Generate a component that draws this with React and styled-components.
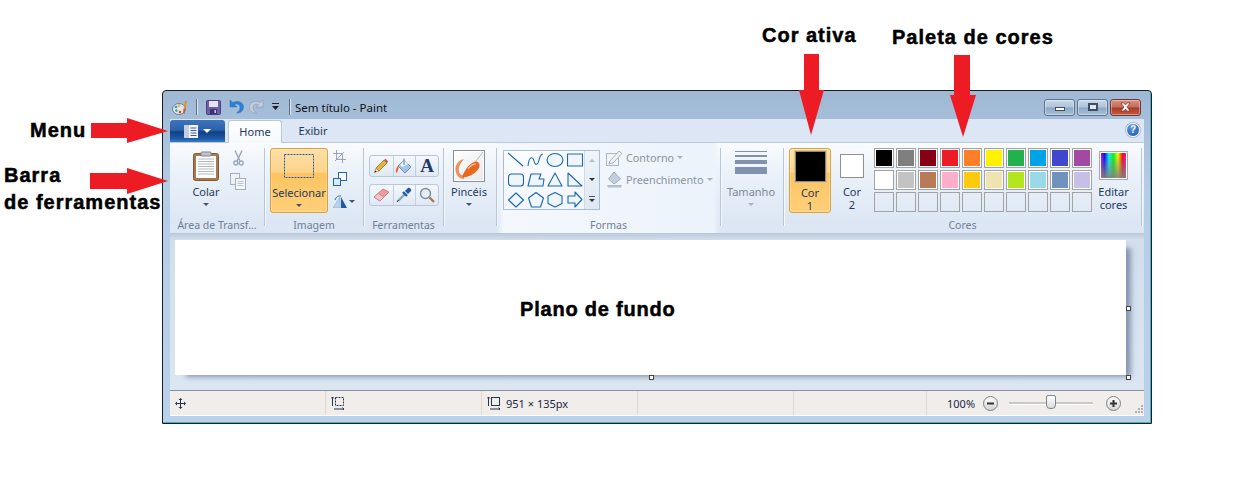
import styled, { createGlobalStyle } from 'styled-components'

const GlobalStyle = createGlobalStyle`
  html, body { margin: 0; padding: 0; background: #fff; }
  body { font-family: "Noto Sans", "Open Sans", sans-serif; }
`

const Page = styled.div`
  position: relative;
  width: 1252px;
  height: 504px;
  padding: 90px 0 0 162px;
  box-sizing: border-box;
  overflow: hidden;
`
const Callout = styled.div`
  position: absolute;
  left: ${p => p.$x}px;
  top: ${p => p.$y}px;
  font: bold 20px/27px "Liberation Sans", Arial, sans-serif;
  letter-spacing: 1px;
  color: #000;
  -webkit-text-stroke: 0.5px #000;
  white-space: nowrap;
`
const ArrowSvg = styled.svg`
  position: absolute;
  left: 0;
  top: 0;
  pointer-events: none;
`
const Window = styled.div`
  width: 990px;
  height: 334px;
  box-sizing: border-box;
  border: 1px solid #1c1c1c;
  border-radius: 4px 4px 0 0;
  background: linear-gradient(#9fb8d4, #b5cde7 30%, #b9d1ea);
  box-shadow: inset -1px -1px 0 #39b4cc;
  padding: 0 7px;
  display: flex;
  flex-direction: column;
`
const TitleBar = styled.div`
  height: 28px;
  display: flex;
  align-items: center;
  flex: none;
  padding: 4px 0 0 2px;
  box-sizing: border-box;
`
const QuickIcon = styled.div`
  width: ${p => p.$w}px;
  margin-right: ${p => p.$gap || 0}px;
  display: flex;
  justify-content: center;
`
const QuickSep = styled.div`
  width: 1px;
  height: 16px;
  background: #5f6f82;
  box-shadow: 1px 0 0 #dbe6f2;
  margin-right: ${p => p.$gap}px;
`
const TitleText = styled.div`
  font-size: 11.5px;
  color: #111;
  flex: 1;
`
const CaptionButtons = styled.div`
  display: flex;
  gap: 2px;
  margin-right: 3px;
`
const CaptionButton = styled.div`
  width: ${p => p.$w}px;
  height: 17px;
  box-sizing: border-box;
  border: 1px solid ${p => (p.$close ? '#6e3a30' : '#5e738c')};
  border-radius: 3px;
  background: ${p => (p.$close
    ? 'linear-gradient(#dc8f80, #c86a58 48%, #a93a26 52%, #c25a44)'
    : 'linear-gradient(#c9d9ea, #aec4da 48%, #8ba6c3 52%, #a9c2db)')};
  box-shadow: inset 0 0 0 1px rgba(255,255,255,.35);
  display: flex;
  align-items: center;
  justify-content: center;
`
const MinGlyph = styled.div`
  width: 10px;
  height: 4px;
  margin-top: 4px;
  box-sizing: border-box;
  background: #fff;
  border: 1px solid #3e4f63;
`
const MaxGlyph = styled.div`
  width: 10px;
  height: 8px;
  box-sizing: border-box;
  background: #dfe8f1;
  border: 2px solid #3e4f63;
  border-top-width: 2px;
`
const TabRow = styled.div`
  height: 24px;
  flex: none;
  background: #dce6f4;
  display: flex;
  align-items: flex-start;
  padding-top: 1px;
  box-sizing: border-box;
  border-bottom: 1px solid #b9c9dc;
`
const MenuButton = styled.div`
  width: 55px;
  height: 22px;
  border-radius: 3px 3px 0 0;
  background: linear-gradient(#3f74b8, #2b62ae 45%, #123f86 55%, #1e5aa8 85%, #3a7cc8);
  display: flex;
  align-items: center;
  justify-content: center;
  gap: 5px;
`
const MenuCaret = styled.div`
  width: 0;
  height: 0;
  border: 4px solid transparent;
  border-top: 4px solid #fff;
  border-bottom: 0;
`
const Tab = styled.div`
  width: ${p => p.$w}px;
  height: 23px;
  margin-left: ${p => p.$ml || 0}px;
  box-sizing: border-box;
  border-radius: 3px 3px 0 0;
  font-size: 11px;
  line-height: 22px;
  text-align: center;
  color: #1e395b;
  ${p => p.$active && `
    background: linear-gradient(#fff, #f5f8fc);
    border: 1px solid #b9c9dc;
    border-bottom: 0;
  `}
`
const HelpIcon = styled.div`
  margin-left: auto;
  margin-right: 4px;
  margin-top: 3px;
  width: 12px;
  height: 12px;
  border-radius: 50%;
  border: 1px solid #fff;
  box-shadow: 0 0 0 1px #9dbbe0;
  background: radial-gradient(circle at 40% 30%, #5f9ae6, #1a4fb0);
  color: #fff;
  font: bold 10px/12px "Liberation Sans", sans-serif;
  text-align: center;
`
const Ribbon = styled.div`
  height: 91px;
  flex: none;
  box-sizing: border-box;
  border-bottom: 1px solid #b9c9dc;
  background: linear-gradient(#f9fbfe, #eaf1f9 35%, #dce6f4 90%);
  display: flex;
`
const Group = styled.div`
  width: ${p => p.$w}px;
  flex: none;
  display: flex;
  flex-direction: column;
  padding-top: 5px;
  box-sizing: border-box;
  ${p => p.$light && 'background: linear-gradient(90deg, transparent, #f4f8fd 3%, #edf3fb 97%, transparent);'}
`
const GroupBody = styled.div`
  height: 70px;
  display: flex;
  padding-left: ${p => p.$pl || 0}px;
  gap: ${p => p.$gap || 0}px;
`
const GroupLabel = styled.div`
  font-size: 10.5px;
  line-height: 14px;
  text-align: center;
  color: #6f7f95;
  white-space: nowrap;
`
const Sep = styled.div`
  width: 1px;
  height: 78px;
  margin-top: 5px;
  flex: none;
  background: #b6c5d8;
  box-shadow: 1px 0 0 #f6f9fd;
`
const BigButton = styled.div`
  width: ${p => p.$w}px;
  height: 65px;
  flex: none;
  box-sizing: border-box;
  display: flex;
  flex-direction: column;
  align-items: center;
  ${p => p.$active && `
    border: 1px solid #d8a23d;
    border-radius: 3px;
    background: linear-gradient(#fedfa6, #fed48c 37%, #fbc45e 38%, #fcc768 55%, #ffcf78);
    box-shadow: inset 0 0 0 1px rgba(255,255,255,.25);
  `}
`
const IconSlot = styled.div`
  height: ${p => p.$h || 37}px;
  flex: none;
  display: flex;
  justify-content: center;
  align-items: flex-start;
  padding-top: ${p => p.$pt || 0}px;
  box-sizing: border-box;
`
const BigLabel = styled.div`
  font-size: 11px;
  line-height: 13px;
  color: ${p => (p.$muted ? '#7f8896' : '#1e395b')};
  text-align: center;
  white-space: nowrap;
`
const Caret = styled.div`
  width: 0;
  height: 0;
  border: 3px solid transparent;
  border-top: 3px solid ${p => p.$color || '#44546a'};
  border-bottom: 0;
  margin: ${p => p.$m || '5px 0 0'};
`
const SmallCol = styled.div`
  width: ${p => p.$w}px;
  flex: none;
  display: flex;
  flex-direction: column;
  align-items: ${p => (p.$start ? 'flex-start' : 'center')};
  padding-top: 2px;
  gap: ${p => p.$gap}px;
`
const SmallRow = styled.div`
  display: flex;
  align-items: center;
  gap: 2px;
`
const ToolCol = styled.div`
  display: flex;
  flex-direction: column;
  gap: 7px;
  padding-top: 7px;
`
const ToolBox = styled.div`
  width: 70px;
  height: 22px;
  box-sizing: border-box;
  display: grid;
  grid-template-columns: repeat(3, 1fr);
  border: 1px solid #b8c7da;
  border-radius: 3px;
  background: linear-gradient(#f4f8fc, #dfe8f4);
`
const ToolCell = styled.div`
  display: flex;
  align-items: center;
  justify-content: center;
  & + & { border-left: 1px solid #c3d0e0; }
`
const TextTool = styled.span`
  font: bold 19px/20px "Liberation Serif", serif;
  color: #1f3a64;
`
const BrushBox = styled.div`
  width: 32px;
  height: 32px;
  box-sizing: border-box;
  border: 1px solid #8b8f95;
  background: linear-gradient(135deg, #fff, #e6e9ee);
  box-shadow: inset 0 0 0 1px #fff;
`
const Gallery = styled.div`
  width: 97px;
  height: 60px;
  margin-top: 2px;
  box-sizing: border-box;
  border: 1px solid #a9bdd3;
  flex: none;
  display: flex;
  background: linear-gradient(#fbfdff, #f1f6fc);
`
const ShapesSvg = styled.svg`
  flex: none;
`
const ScrollCol = styled.div`
  width: 14px;
  flex: none;
  margin-left: auto;
  border-left: 1px solid #d0dbe8;
  background: linear-gradient(#eff4fa, #dfe8f3);
  display: flex;
  flex-direction: column;
  align-items: center;
`
const ScrollBtn = styled.div`
  flex: 1;
  display: flex;
  flex-direction: column;
  align-items: center;
  justify-content: center;
  gap: 2px;
`
const ScrollLine = styled.div`
  width: 6px;
  height: 1px;
  background: #44546a;
`
const UpCaret = styled.div`
  width: 0;
  height: 0;
  border: 3px solid transparent;
  border-bottom: 3px solid #b0bac6;
  border-top: 0;
`
const ShapeActions = styled.div`
  display: flex;
  flex-direction: column;
  gap: 3px;
  margin-top: -1px;
`
const ShapeAction = styled.div`
  display: flex;
  align-items: center;
  height: 17px;
  gap: 3px;
  font-size: 10.8px;
  color: #8a93a2;
  white-space: nowrap;
  margin-top: 2px;
`
const SizeLines = styled.div`
  width: 32px;
  display: flex;
  flex-direction: column;
  gap: 3px;
  padding-top: 3px;
`
const SizeLine = styled.div`
  height: ${p => p.$h}px;
  background: #8092ae;
`
const ActiveSwatch = styled.div`
  width: 31px;
  height: 31px;
  box-sizing: border-box;
  border: 1px solid #8a8a8a;
  outline: 1px solid #e9c27a;
  background: ${p => p.$c};
  margin-top: 2px;
`
const SecondSwatch = styled.div`
  width: 24px;
  height: 24px;
  box-sizing: border-box;
  border: 1px solid #8f8f8f;
  background: #fff;
  margin-top: 6px;
`
const Palette = styled.div`
  display: grid;
  grid-template-columns: repeat(10, 20px);
  grid-auto-rows: 20px;
  gap: 2px;
  flex: none;
  width: 218px;
  margin-left: 1px;
`
const Swatch = styled.div`
  box-sizing: border-box;
  border: 1px solid #a3a3a3;
  background: ${p => p.$c || 'transparent'};
  box-shadow: ${p => (p.$c ? 'inset 0 0 0 1px #fff' : 'none')};
`
const EditColors = styled.div`
  width: 29px;
  height: 29px;
  margin-top: 3px;
  box-sizing: border-box;
  border: 1px solid #a8a8a8;
  box-shadow: inset 0 0 0 1px #fff;
  background:
    linear-gradient(rgba(255,255,255,0), rgba(130,130,130,.95)),
    linear-gradient(90deg, #f0f, #00f, #0ff, #0f0, #ff0, #f00, #f0f);
`
const CanvasArea = styled.div`
  height: 156px;
  flex: none;
  box-sizing: border-box;
  background: linear-gradient(#bfccde, #d3deec 6px, #dce6f2);
  padding: 6px 0 0 5px;
`
const Canvas = styled.div`
  position: relative;
  width: 951px;
  height: 135px;
  box-sizing: border-box;
  padding: 4px 0 0 345px;
  background: #fff;
  box-shadow: 8px 5px 5px -3px rgba(70, 90, 125, .55);
  display: flex;
  align-items: center;
`
const CanvasText = styled.div`
  font: bold 20px/27px "Liberation Sans", Arial, sans-serif;
  letter-spacing: 0.8px;
  -webkit-text-stroke: 0.5px #000;
  color: #000;
`
const Handle = styled.div`
  position: absolute;
  width: 5px;
  height: 5px;
  box-sizing: border-box;
  background: #fff;
  border: 1px solid #444;
  left: ${p => p.$x}px;
  top: ${p => p.$y}px;
`
const StatusBar = styled.div`
  height: 26px;
  flex: none;
  box-sizing: border-box;
  border-top: 1px solid #8a9099;
  border-bottom: 1px solid #fff;
  background: #f0edeb;
  display: grid;
  grid-template-columns: 156px 156px 156px 156px 133px 1fr;
`
const StatusCell = styled.div`
  display: flex;
  align-items: center;
  padding-left: ${p => p.$pl || 0}px;
  gap: ${p => p.$gap || 0}px;
  border-right: ${p => (p.$last ? 'none' : '1px solid #dcd9d6')};
  font-size: 11px;
  color: #1a2a44;
  white-space: nowrap;
  position: relative;
`
const ZoomTrack = styled.div`
  position: relative;
  width: 84px;
  height: 2px;
  background: #c9c9c9;
  border-bottom: 1px solid #fff;
  margin-left: 11px;
  margin-right: 13px;
`
const ZoomThumb = styled.div`
  position: absolute;
  left: 37px;
  top: -7px;
  width: 10px;
  height: 14px;
  box-sizing: border-box;
  border: 1px solid #7f858c;
  border-radius: 2px 2px 4px 4px;
  background: linear-gradient(#fff, #d9dadc);
`
const ZoomBtn = styled.div`
  width: 15px;
  height: 15px;
  box-sizing: border-box;
  border: 1px solid #7b7f85;
  border-radius: 50%;
  background: linear-gradient(#fdfdfd, #d5d5d5);
  color: #333;
  display: flex;
  align-items: center;
  justify-content: center;
  margin-left: ${p => p.$ml || 0}px;
`
const Grip = styled.svg`
  position: absolute;
  right: 0;
  bottom: 1px;
`

const row1 = ['#000000', '#7f7f7f', '#880015', '#ed1c24', '#ff7f27', '#fff200', '#22b14c', '#00a2e8', '#3f48cc', '#a349a4']
const row2 = ['#ffffff', '#c3c3c3', '#b97a57', '#ffaec9', '#ffc90e', '#efe4b0', '#b5e61d', '#99d9ea', '#7092be', '#c8bfe7']

const Arrows = () => (
  <ArrowSvg width="1252" height="504">
    <g fill="#ed1c24">
      <polygon points="91,123 127,123 127,118 168,131 127,143 127,138 91,138" />
      <polygon points="90,173 127,173 127,168 168,181 127,194 127,189 90,189" />
      <polygon points="804,54 819,54 819,90 824,90 811,135 799,90 804,90" />
      <polygon points="954,55 970,55 970,95 976,95 963,137 950,95 954,95" />
    </g>
  </ArrowSvg>
)

const AppIcon = () => (
  <svg width="17" height="17" viewBox="0 0 17 17">
    <ellipse cx="7" cy="10" rx="6.5" ry="5.5" fill="#dfe6ee" stroke="#6f8096" />
    <circle cx="4" cy="8" r="1.3" fill="#3f8fd8" />
    <circle cx="7" cy="6.6" r="1.3" fill="#e8b52c" />
    <circle cx="4.4" cy="11.6" r="1.3" fill="#4fae54" />
    <circle cx="8" cy="13" r="1.3" fill="#c8453a" />
    <path d="M13 1.5 L15 2 L13.5 10 L11.5 9.5Z" fill="#e98a2a" />
    <path d="M11.5 9.5 L13.5 10 L12.5 15 L11 14Z" fill="#c8602a" />
  </svg>
)
const SaveIcon = () => (
  <svg width="15" height="15" viewBox="0 0 15 15">
    <rect x="0.5" y="0.5" width="14" height="14" rx="1" fill="#6d5fa8" stroke="#4a3f80" />
    <rect x="3" y="1" width="9" height="6" fill="#e4e2f2" />
    <rect x="4" y="9" width="7" height="5" fill="#3c3470" />
    <rect x="8.5" y="10" width="1.5" height="3" fill="#cfcbe6" />
  </svg>
)
const UndoIcon = ({ color, edge, flip }) => (
  <svg width="15" height="16" viewBox="0 0 15 16" style={flip ? { transform: 'scaleX(-1)' } : undefined}>
    <path d="M1 1 L1 8 L8 8 L5.5 5.6 C7.5 4.4 11 5 11 8.5 C11 11 9.5 12.5 7.5 14 C11.5 14.5 14.5 11.5 14.5 8 C14.5 3 8.5 1 4 3.6Z" fill={color} stroke={edge} strokeWidth=".6" />
  </svg>
)
const QatDrop = () => (
  <svg width="9" height="8" viewBox="0 0 9 8">
    <rect x="1" y="0" width="7" height="1" fill="#222" />
    <path d="M1 3 H8 L4.5 7Z" fill="#222" />
  </svg>
)
const CloseGlyph = () => (
  <svg width="13" height="10" viewBox="0 0 13 10">
    <path d="M2 1 L5 1 L6.5 3 L8 1 L11 1 L8 5 L11 9 L8 9 L6.5 7 L5 9 L2 9 L5 5Z" fill="#fff" stroke="#6a2a1e" strokeWidth=".6" />
  </svg>
)
const MenuIcon = () => (
  <svg width="14" height="13" viewBox="0 0 14 13">
    <rect x="0" y="0" width="14" height="13" fill="#f4f6fa" />
    <rect x="0" y="0" width="5" height="13" fill="#c4cedd" />
    <path d="M6.5 3 H12.5 M6.5 5.5 H12.5 M6.5 8 H12.5 M6.5 10.5 H12.5" stroke="#335f9c" />
  </svg>
)
const ClipboardIcon = () => (
  <svg width="26" height="30" viewBox="0 0 26 30">
    <rect x="0.5" y="2.5" width="25" height="27" rx="2" fill="#a9794d" stroke="#7b5a3a" />
    <rect x="3" y="5" width="20" height="22" fill="#fff" />
    <path d="M5 8 H21 M5 10.5 H21 M5 13 H21 M5 15.5 H21 M5 18 H21 M5 20.5 H21 M5 23 H21" stroke="#b4b8bd" />
    <rect x="8" y="1" width="10" height="4" rx="1" fill="#c2c6cc" stroke="#7e838a" />
  </svg>
)
const ScissorsIcon = () => (
  <svg width="11" height="16" viewBox="0 0 11 16" fill="none" stroke="#9aa6b5" strokeWidth="1.4">
    <path d="M2 0.5 L7 11 M9 0.5 L4 11" />
    <circle cx="2.8" cy="13" r="2" />
    <circle cx="8.2" cy="13" r="2" />
  </svg>
)
const CopyIcon = () => (
  <svg width="16" height="17" viewBox="0 0 16 17">
    <rect x="0.5" y="0.5" width="9" height="11" fill="#eef2f7" stroke="#a4afbd" />
    <rect x="5.5" y="5.5" width="10" height="11" fill="#f6f8fb" stroke="#a4afbd" />
    <path d="M7.5 8.5 H13.5 M7.5 10.5 H13.5 M7.5 12.5 H13.5" stroke="#b9c3cf" />
  </svg>
)
const CropIcon = () => (
  <svg width="13" height="13" viewBox="0 0 13 13" fill="none" stroke="#9aa6b5">
    <path d="M3.5 0 V9.5 H13 M0 3.5 H9.5 V13 M2 11 L11 2" />
  </svg>
)
const ResizeIcon = () => (
  <svg width="14" height="14" viewBox="0 0 14 14" fill="#fff" stroke="#1f66b0">
    <rect x="5.5" y="0.5" width="8" height="8" />
    <rect x="0.5" y="6.5" width="7" height="7" fill="#dcebf8" />
  </svg>
)
const RotateIcon = () => (
  <svg width="14" height="13" viewBox="0 0 14 13">
    <path d="M7 2 L7 13 L0 13Z" fill="#b9d6ee" stroke="#7ea6c8" strokeWidth=".6" />
    <path d="M8 2 L8 13 L14 13Z" fill="#1d5a9e" />
    <path d="M2 5 C3 1.5 6 0.5 8 1" fill="none" stroke="#1f66b0" />
  </svg>
)
const PencilIcon = () => (
  <svg width="16" height="16" viewBox="0 0 16 16">
    <path d="M3 10 L11 2 L14 5 L6 13Z" fill="#e9b23a" stroke="#7f6420" strokeWidth=".7" />
    <path d="M3 10 L6 13 L1.5 14.5Z" fill="#f2dcb8" stroke="#7f6420" strokeWidth=".5" />
    <path d="M11 2 L12.5 .8 L15.2 3.5 L14 5Z" fill="#b85c50" />
    <path d="M1.5 14.5 L2.2 12.6 L3.5 13.8Z" fill="#222" />
  </svg>
)
const FillIcon = () => (
  <svg width="18" height="17" viewBox="0 0 18 17">
    <path d="M9 2 L16 9 L10 15 L3 8Z" fill="#9cc6ea" stroke="#5f7f9f" strokeWidth=".8" />
    <path d="M5 7 L9 2 L13 6 L8 9Z" fill="#eef4fa" />
    <path d="M9 0.5 V7" stroke="#6a7a8a" />
    <path d="M3.5 7.5 C1 9 0.5 12 1 15 C2.5 15 3 12 3.5 10.5Z" fill="#e8682a" />
  </svg>
)
const EraserIcon = () => (
  <svg width="17" height="14" viewBox="0 0 17 14">
    <path d="M1 9 L10 1 L16 4 L7 13Z" fill="#f09a9a" stroke="#a56a6a" strokeWidth=".7" />
    <path d="M1 9 L5 5.5 L11 9 L7 13Z" fill="#f8c4c4" stroke="#a56a6a" strokeWidth=".5" />
  </svg>
)
const DropperIcon = () => (
  <svg width="16" height="16" viewBox="0 0 16 16">
    <path d="M2 14 L9 7" stroke="#8fa3b8" strokeWidth="2.4" />
    <path d="M7 5 L11 9" stroke="#1d5a9e" strokeWidth="2.4" />
    <path d="M9 4 L12 1 C13.5 0 16 2.5 15 4 L12 7Z" fill="#1d5a9e" />
    <path d="M1 15 L2.5 13" stroke="#333" />
  </svg>
)
const LensIcon = () => (
  <svg width="16" height="16" viewBox="0 0 16 16">
    <circle cx="6.5" cy="6.5" r="5" fill="#e4eff9" stroke="#7f8c9b" strokeWidth="1.4" />
    <path d="M10.5 10.5 L15 15" stroke="#a77a4a" strokeWidth="2.4" />
  </svg>
)
const BrushIcon = () => (
  <svg width="30" height="30" viewBox="0 0 30 30">
    <path d="M29 1 L22 10" stroke="#b4b8bf" strokeWidth="1" />
    <path d="M10 8 C5 9 1 13 1.5 19 C2 25 6 28 10 28 L10 25 C6 24 4 21 5 17 C5.5 13 8 11 10 8Z" fill="#ee8f5e" />
    <path d="M8 26 C10 20 15 13 20 11 C23 9.5 27 12 25 17 C22 22 15 27 8 26Z" fill="#e8681f" />
    <path d="M14 18 C16 15 19 13 22 13" stroke="#f6b48a" strokeWidth="1.3" fill="none" />
  </svg>
)
const ShapesArt = () => (
  <ShapesSvg width="80" height="58" viewBox="-1 0 80 58" fill="#eef5fb" stroke="#1f66ac" strokeWidth="1.1" strokeLinejoin="round">
    <path d="M3 2 L18 15" fill="none" />
    <path d="M23 15 C24 5 28 5 29 10 C30 15 33 14 34 9 C35 5 37 3 38 3" fill="none" />
    <ellipse cx="50" cy="9" rx="8" ry="6.5" />
    <rect x="62.5" y="3" width="15" height="12" />
    <rect x="3.5" y="23" width="15" height="12" rx="3" />
    <path d="M26 23 H36 L34 28 H39 L38 35 H23Z" />
    <path d="M50 22 L57 35 H43Z" />
    <path d="M63 22 L77 35 H63Z" />
    <path d="M11 42 L18.5 49 L11 56 L3.5 49Z" />
    <path d="M31 41.5 L38.5 47 L35.5 56 H26.5 L23.5 47Z" />
    <path d="M50 41.5 L57 45 V52.5 L50 56 L43 52.5 V45Z" />
    <path d="M63 45 H70 V41 L77 48.5 L70 56 V52 H63Z" />
  </ShapesSvg>
)
const OutlineIcon = () => (
  <svg width="17" height="17" viewBox="0 0 17 17">
    <rect x="0.5" y="4.5" width="12" height="12" fill="none" stroke="#aab5c3" />
    <path d="M4 12 L13 2 L16 4.5 L7 14 L3 15Z" fill="#eef2f7" stroke="#98a4b4" strokeWidth=".8" />
  </svg>
)
const BucketIcon = () => (
  <svg width="17" height="17" viewBox="0 0 17 17">
    <path d="M8 1 L14.5 8 L8 13 L2.5 8Z" fill="#c3cfdd" stroke="#8f9cae" strokeWidth=".8" />
    <path d="M1 14 H16 L15 16.5 H2Z" fill="#b3bfce" />
  </svg>
)
const MoveIcon = () => (
  <svg width="11" height="11" viewBox="0 0 11 11" fill="#24364e">
    <rect x="5" y="1" width="1" height="9" />
    <rect x="1" y="5" width="9" height="1" />
    <path d="M5.5 0 L7.5 2 H3.5Z M5.5 11 L3.5 9 H7.5Z M0 5.5 L2 3.5 V7.5Z M11 5.5 L9 7.5 V3.5Z" />
  </svg>
)
const SelectSizeIcon = ({ dashed }) => (
  <svg width="14" height="14" viewBox="0 0 14 14" fill="none" stroke="#24364e">
    <path d="M1.5 10 V1 M0 2.5 L1.5 1 L3 2.5" />
    <path d="M3 13 H13 M11.5 11.5 L13 13 L11.5 14" />
    <rect x="4.5" y="1.5" width="8" height="8" strokeDasharray={dashed ? '2 1' : undefined} />
  </svg>
)

const App = () => {
  return (
    <Page>
      <GlobalStyle />
      <Window>
        <TitleBar>
          <QuickIcon $w={17} $gap={7}><AppIcon /></QuickIcon>
          <QuickSep $gap={9} />
          <QuickIcon $w={15} $gap={8}><SaveIcon /></QuickIcon>
          <QuickIcon $w={15} $gap={5}><UndoIcon color="#2f7fcf" edge="#2f7fcf" /></QuickIcon>
          <QuickIcon $w={15} $gap={7}><UndoIcon color="#c3ceda" edge="#8d9cae" flip /></QuickIcon>
          <QuickIcon $w={9} $gap={9}><QatDrop /></QuickIcon>
          <QuickSep $gap={5} />
          <TitleText>Sem título - Paint</TitleText>
          <CaptionButtons>
            <CaptionButton $w={31}><MinGlyph /></CaptionButton>
            <CaptionButton $w={31}><MaxGlyph /></CaptionButton>
            <CaptionButton $w={31} $close><CloseGlyph /></CaptionButton>
          </CaptionButtons>
        </TitleBar>

        <TabRow>
          <MenuButton><MenuIcon /><MenuCaret /></MenuButton>
          <Tab $w={54} $ml={3} $active>Home</Tab>
          <Tab $w={62}>Exibir</Tab>
          <HelpIcon>?</HelpIcon>
        </TabRow>

        <Ribbon>
          <Group $w={94}>
            <GroupBody $pl={14} $gap={2}>
              <BigButton $w={44}>
                <IconSlot $pt={3}><ClipboardIcon /></IconSlot>
                <BigLabel>Colar</BigLabel>
                <Caret />
              </BigButton>
              <SmallCol $w={16} $gap={7}>
                <ScissorsIcon />
                <CopyIcon />
              </SmallCol>
            </GroupBody>
            <GroupLabel>Área de Transf...</GroupLabel>
          </Group>
          <Sep />

          <Group $w={98}>
            <GroupBody $pl={5} $gap={5}>
              <BigButton $w={58} $active>
                <IconSlot $pt={5}>
                  <svg width="30" height="24" viewBox="0 0 30 24"><rect x=".5" y=".5" width="29" height="23" fill="none" stroke="#1a5fb0" strokeDasharray="2 1" /></svg>
                </IconSlot>
                <BigLabel>Selecionar</BigLabel>
                <Caret />
              </BigButton>
              <SmallCol $w={22} $gap={9} $start>
                <CropIcon />
                <ResizeIcon />
                <SmallRow><RotateIcon /><Caret $m="0" /></SmallRow>
              </SmallCol>
            </GroupBody>
            <GroupLabel>Imagem</GroupLabel>
          </Group>
          <Sep />

          <Group $w={79}>
            <GroupBody $pl={5}>
              <ToolCol>
                <ToolBox>
                  <ToolCell><PencilIcon /></ToolCell>
                  <ToolCell><FillIcon /></ToolCell>
                  <ToolCell><TextTool>A</TextTool></ToolCell>
                </ToolBox>
                <ToolBox>
                  <ToolCell><EraserIcon /></ToolCell>
                  <ToolCell><DropperIcon /></ToolCell>
                  <ToolCell><LensIcon /></ToolCell>
                </ToolBox>
              </ToolCol>
            </GroupBody>
            <GroupLabel>Ferramentas</GroupLabel>
          </Group>
          <Sep />

          <Group $w={52}>
            <GroupBody>
              <BigButton $w={50}>
                <IconSlot $pt={2}><BrushBox><BrushIcon /></BrushBox></IconSlot>
                <BigLabel>Pincéis</BigLabel>
                <Caret />
              </BigButton>
            </GroupBody>
          </Group>
          <Sep />

          <Group $w={223} $light>
            <GroupBody $pl={6} $gap={6}>
              <Gallery>
                <ShapesArt />
                <ScrollCol>
                  <ScrollBtn><UpCaret /></ScrollBtn>
                  <ScrollBtn><Caret $m="0" $color="#333" /></ScrollBtn>
                  <ScrollBtn><ScrollLine /><Caret $m="0" $color="#333" /></ScrollBtn>
                </ScrollCol>
              </Gallery>
              <ShapeActions>
                <ShapeAction><OutlineIcon />Contorno<Caret $m="0" $color="#a9b2be" /></ShapeAction>
                <ShapeAction><BucketIcon />Preenchimento<Caret $m="0" $color="#a9b2be" /></ShapeAction>
              </ShapeActions>
            </GroupBody>
            <GroupLabel>Formas</GroupLabel>
          </Group>
          <Sep />

          <Group $w={62}>
            <GroupBody>
              <BigButton $w={60}>
                <IconSlot>
                  <SizeLines>
                    <SizeLine $h={1} />
                    <SizeLine $h={2} />
                    <SizeLine $h={4} />
                    <SizeLine $h={7} />
                  </SizeLines>
                </IconSlot>
                <BigLabel $muted>Tamanho</BigLabel>
                <Caret $color="#a9b2be" />
              </BigButton>
            </GroupBody>
          </Group>
          <Sep />

          <Group $w={357}>
            <GroupBody $pl={5}>
              <BigButton $w={42} $active>
                <IconSlot><ActiveSwatch $c="#000" /></IconSlot>
                <BigLabel>Cor</BigLabel>
                <BigLabel>1</BigLabel>
              </BigButton>
              <BigButton $w={42}>
                <IconSlot><SecondSwatch /></IconSlot>
                <BigLabel>Cor</BigLabel>
                <BigLabel>2</BigLabel>
              </BigButton>
              <Palette>
                {row1.map(c => <Swatch key={c} $c={c} />)}
                {row2.map(c => <Swatch key={c} $c={c} />)}
                {row1.map(c => <Swatch key={c} />)}
              </Palette>
              <BigButton $w={43}>
                <IconSlot><EditColors /></IconSlot>
                <BigLabel>Editar</BigLabel>
                <BigLabel>cores</BigLabel>
              </BigButton>
            </GroupBody>
            <GroupLabel>Cores</GroupLabel>
          </Group>
          <Sep />
        </Ribbon>

        <CanvasArea>
          <Canvas>
            <CanvasText>Plano de fundo</CanvasText>
            <Handle $x={951} $y={66} />
            <Handle $x={474} $y={135} />
            <Handle $x={951} $y={135} />
          </Canvas>
        </CanvasArea>

        <StatusBar>
          <StatusCell $pl={5}><MoveIcon /></StatusCell>
          <StatusCell $pl={5}><SelectSizeIcon dashed /></StatusCell>
          <StatusCell $pl={5} $gap={5}><SelectSizeIcon />951 × 135px</StatusCell>
          <StatusCell />
          <StatusCell />
          <StatusCell $last $pl={20}>
            100%
            <ZoomBtn $ml={8}><svg width="9" height="9" viewBox="0 0 9 9"><rect x="1" y="3.5" width="7" height="2" fill="#333" /></svg></ZoomBtn>
            <ZoomTrack><ZoomThumb /></ZoomTrack>
            <ZoomBtn><svg width="9" height="9" viewBox="0 0 9 9"><path d="M1 3.5 H3.5 V1 H5.5 V3.5 H8 V5.5 H5.5 V8 H3.5 V5.5 H1Z" fill="#333" /></svg></ZoomBtn>
            <Grip width="11" height="11" viewBox="0 0 11 11" fill="#aeb2b6">
              <rect x="8" y="2" width="2" height="2" /><rect x="5" y="5" width="2" height="2" /><rect x="8" y="5" width="2" height="2" />
              <rect x="2" y="8" width="2" height="2" /><rect x="5" y="8" width="2" height="2" /><rect x="8" y="8" width="2" height="2" />
            </Grip>
          </StatusCell>
        </StatusBar>
      </Window>

      <Arrows />
      <Callout $x={30} $y={117}>Menu</Callout>
      <Callout $x={4} $y={162}>Barra</Callout>
      <Callout $x={4} $y={189}>de ferramentas</Callout>
      <Callout $x={762} $y={22}>Cor ativa</Callout>
      <Callout $x={892} $y={24}>Paleta de cores</Callout>
    </Page>
  )
}

export default App
